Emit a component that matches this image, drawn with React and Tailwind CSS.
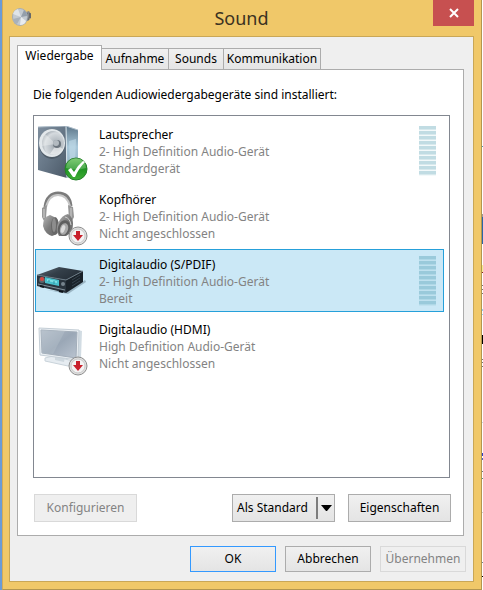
import clsx from "clsx";

const tabs = [
  { label: "Wiedergabe", width: "w-[85px]" },
  { label: "Aufnahme", width: "w-[67px]" },
  { label: "Sounds", width: "w-[55px]" },
  { label: "Kommunikation", width: "w-[97px]" },
];

const SpeakerIcon = () => (
  <svg width="52" height="56" viewBox="0 0 52 56" aria-hidden="true">
    <defs>
      <linearGradient id="spFront" x1="0" y1="0" x2="1" y2="1">
        <stop offset="0" stopColor="#7f8f9f" />
        <stop offset="0.5" stopColor="#667686" />
        <stop offset="1" stopColor="#4b5967" />
      </linearGradient>
      <linearGradient id="spSide" x1="0" y1="0" x2="0" y2="1">
        <stop offset="0" stopColor="#5d7689" />
        <stop offset="0.4" stopColor="#a9c8da" />
        <stop offset="1" stopColor="#8ba9ba" />
      </linearGradient>
      <radialGradient id="spCone" cx="0.65" cy="0.6" r="0.65">
        <stop offset="0" stopColor="#8f979e" />
        <stop offset="0.4" stopColor="#b9c0c6" />
        <stop offset="0.8" stopColor="#d5dade" />
        <stop offset="1" stopColor="#a9b1b8" />
      </radialGradient>
    </defs>
    <path d="M1 1 L29 0 L30 52 L1 44 Z" fill="url(#spFront)" />
    <path d="M29 0 L41 4 L41 47 L30 52 Z" fill="url(#spSide)" />
    <path d="M32 15 L39 13 L38 39 L33 40 Z" fill="#c3dcea" opacity="0.6" />
    <path d="M29 0 L30 52" stroke="#d9e5ec" strokeWidth="1" />
    <path d="M1 1 L29 0 L41 4" fill="none" stroke="#aebdc9" strokeWidth="1" />
    <ellipse cx="15" cy="18" rx="13" ry="15" fill="#4f5c68" />
    <ellipse cx="15" cy="17" rx="13" ry="14" fill="#e3e8eb" />
    <ellipse cx="16" cy="17" rx="11" ry="12" fill="url(#spCone)" />
    <path d="M19 18 L8 8 Q4 13 5 20 Z" fill="#f3f5f6" opacity="0.4" />
    <path d="M19 19 L13 28 Q21 31 26 23 Z" fill="#f7f8f9" opacity="0.6" />
    <ellipse cx="20" cy="18" rx="4" ry="4" fill="#6b747d" />
    <ellipse cx="19" cy="17" rx="3" ry="3" fill="#b3bac0" />
  </svg>
);

const HeadphonesIcon = () => (
  <svg width="52" height="56" viewBox="0 0 52 56" aria-hidden="true">
    <defs>
      <linearGradient id="hpCup" x1="0" y1="0" x2="1" y2="1">
        <stop offset="0" stopColor="#b5b5b5" />
        <stop offset="0.5" stopColor="#7c7c7c" />
        <stop offset="1" stopColor="#666" />
      </linearGradient>
    </defs>
    <path d="M8 16 C9 6 15 2 21 2 C28 2 33 6 34 15" fill="none" stroke="#7b7b7b" strokeWidth="3" />
    <path d="M9 16 C11 8 15 4 21 4 C27 4 31 8 33 15" fill="none" stroke="#c6c6c6" strokeWidth="2" />
    <path d="M5 17 L10 14 L9 27 L12 31 L8 32 L5 26 Z" fill="#979797" />
    <path d="M31 14 L36 16 L37 26 L34 32 L32 28 Z" fill="#979797" />
    <path d="M7 18 V27 M34 17 V27" stroke="#d0d0d0" strokeWidth="1" />
    <path d="M13 24 Q6 26 6 35 Q8 43 15 45 Q21 44 21 35 Q20 26 13 24 Z" fill="url(#hpCup)" />
    <ellipse cx="18" cy="35" rx="4" ry="9" fill="#686868" />
    <ellipse cx="17" cy="34" rx="2" ry="7" fill="#8d8d8d" />
    <path d="M31 23 Q36 26 36 33 Q36 42 29 45 L22 45 Q18 39 21 32 Q25 24 31 23 Z" fill="url(#hpCup)" />
    <ellipse cx="27" cy="37" rx="6" ry="8" fill="#5f5f5f" transform="rotate(18 27 37)" />
    <ellipse cx="27" cy="38" rx="4" ry="6" fill="#a8a8a8" transform="rotate(18 27 38)" />
    <ellipse cx="26" cy="38" rx="2" ry="4" fill="#dcdcdc" transform="rotate(18 26 38)" />
    <path d="M28 26 Q33 27 34 34" fill="none" stroke="#cdcdcd" strokeWidth="1" />
  </svg>
);

const ReceiverIcon = () => (
  <svg width="52" height="56" viewBox="0 0 52 56" aria-hidden="true">
    <defs>
      <linearGradient id="rcTop" x1="0" y1="0" x2="1" y2="0.6">
        <stop offset="0" stopColor="#5f6c76" />
        <stop offset="0.5" stopColor="#343f49" />
        <stop offset="1" stopColor="#252e37" />
      </linearGradient>
    </defs>
    <path d="M29 36 L48 24 L49 26 L31 38 L10 34 Z" fill="#7c95a3" opacity="0.6" />
    <path d="M0 19 L22 11 L46 15 L29 24 Z" fill="url(#rcTop)" />
    <path d="M29 24 L46 15 L46 26 L29 37 Z" fill="#1a2229" />
    <path d="M0 19 L29 24 L29 37 L0 30 Z" fill="#2a343d" />
    <path d="M0 19 L29 24 L46 15" fill="none" stroke="#6a7984" strokeWidth="1" />
    <path d="M1 28 L28 34" stroke="#82909a" strokeWidth="1" />
    <path d="M8 21 L22 24 L22 30 L8 27 Z" fill="#49bfcb" />
    <path d="M10 23 L20 25 L20 27 L10 25 Z" fill="#7fdfe4" />
    <path d="M12 24 V26 M17 25 V28" stroke="#2b93a4" strokeWidth="1" />
    <circle cx="5" cy="24" r="3" fill="#5b646b" />
    <circle cx="5" cy="23" r="2" fill="#d5453f" />
    <circle cx="26" cy="28" r="2" fill="#76838d" />
    <path d="M3 30 L7 31 M22 35 L26 36" stroke="#0e1419" strokeWidth="2" />
    <path d="M35 24 L43 19 M35 27 L43 22 M35 30 L43 25" stroke="#35424d" strokeWidth="1" />
  </svg>
);

const MonitorIcon = () => (
  <svg width="52" height="56" viewBox="0 0 52 56" aria-hidden="true">
    <defs>
      <linearGradient id="mnScreen" x1="0" y1="0" x2="1" y2="1">
        <stop offset="0" stopColor="#b3bdc9" />
        <stop offset="0.5" stopColor="#9aa7b6" />
        <stop offset="1" stopColor="#bac4d0" />
      </linearGradient>
    </defs>
    <path d="M8 37 L16 35 L36 40 L36 43 L31 45 L8 40 Z" fill="#e6ecf1" stroke="#c9d3da" />
    <path d="M18 34 L28 36 L27 41 L18 39 Z" fill="#cdd7de" />
    <path d="M41 9 L45 10 L44 37 L41 39 Z" fill="#d2dce3" />
    <path d="M2 7 L42 9 L41 39 L3 34 Z" fill="#eaeff3" stroke="#c4ced6" />
    <path d="M4 9 L40 11 L39 37 L5 32 Z" fill="url(#mnScreen)" stroke="#a3aeba" />
    <path d="M4 9 L28 10 L16 33 L5 32 Z" fill="#d3dae2" opacity="0.2" />
  </svg>
);

const CheckBadge = () => (
  <svg width="24" height="24" viewBox="0 0 24 24" aria-hidden="true">
    <defs>
      <linearGradient id="ckBg" x1="0" y1="0" x2="0" y2="1">
        <stop offset="0" stopColor="#5fc052" />
        <stop offset="0.5" stopColor="#1f9422" />
        <stop offset="1" stopColor="#3fae35" />
      </linearGradient>
    </defs>
    <circle cx="12" cy="12" r="11" fill="url(#ckBg)" stroke="#25802a" />
    <path d="M2 11 A10 10 0 0 1 22 11 Q12 14 2 11 Z" fill="#fff" opacity="0.2" />
    <path d="M4 13 L7 11 L10 15 Q14 8 19 4 L21 5 Q15 11 11 20 L9 20 Z" fill="#fff" />
  </svg>
);

const UnpluggedBadge = () => (
  <svg width="20" height="20" viewBox="0 0 20 20" aria-hidden="true">
    <circle cx="10" cy="10" r="9" fill="#e0e0e0" stroke="#8e8e8e" />
    <circle cx="10" cy="10" r="7" fill="#f3f3f3" stroke="#c9c9c9" />
    <path d="M8 5 H12 V9 H15 L10 15 L5 9 H8 Z" fill="#c8202c" />
  </svg>
);

const TitleIcon = () => (
  <svg width="20" height="20" viewBox="0 0 20 20" aria-hidden="true">
    <path d="M10 3 L14 5 L17 4 L19 7 L19 11 L16 14 L14 14 L10 17 Z" fill="#85888a" />
    <path d="M15 6 L16 13 M18 6 L18 11" stroke="#484b4d" strokeWidth="1" />
    <ellipse cx="8" cy="10" rx="8" ry="9" fill="#a5adb4" />
    <ellipse cx="8" cy="10" rx="7" ry="8" fill="#c3cad0" />
    <path d="M9 10 L1 7 Q2 3 6 2 Z" fill="#dfe4e8" />
    <path d="M9 10 L12 3 Q15 5 15 9 Z" fill="#939eaa" />
    <path d="M9 10 L8 18 Q13 18 14 14 Z" fill="#e9ecef" />
    <path d="M9 10 L1 12 Q2 16 5 17 Z" fill="#a8b1ba" />
  </svg>
);

const devices = [
  {
    name: "Lautsprecher",
    driver: "2- High Definition Audio-Gerät",
    status: "Standardgerät",
    Icon: SpeakerIcon,
    Badge: CheckBadge,
    badgeClass: "left-[27px] top-[31px]",
    meter: true,
  },
  {
    name: "Kopfhörer",
    driver: "2- High Definition Audio-Gerät",
    status: "Nicht angeschlossen",
    Icon: HeadphonesIcon,
    Badge: UnpluggedBadge,
    badgeClass: "left-[31px] top-[35px]",
  },
  {
    name: "Digitalaudio (S/PDIF)",
    driver: "2- High Definition Audio-Gerät",
    status: "Bereit",
    Icon: ReceiverIcon,
    meter: true,
    selected: true,
  },
  {
    name: "Digitalaudio (HDMI)",
    driver: "High Definition Audio-Gerät",
    status: "Nicht angeschlossen",
    Icon: MonitorIcon,
    Badge: UnpluggedBadge,
    badgeClass: "left-[31px] top-[35px]",
  },
];

// strip of the window behind the dialog: gap above, height, colour
const behind = [
  [146, 1, "#4f9bb0"],
  [67, 3, "#9a9a9a"],
  [0, 27, "#2a66a8"],
  [21, 7, "#f6ee8e"],
  [0, 1, "#8c1d1d"],
  [12, 1, "#777"],
  [3, 1, "#777"],
  [3, 1, "#777"],
  [15, 2, "#8fd0f5"],
  [3, 1, "#8fd0f5"],
  [20, 9, "#000"],
  [15, 1, "#777"],
  [2, 1, "#777"],
  [3, 1, "#777"],
  [55, 1, "#c8d4e0"],
  [30, 3, "#2b3fc4"],
  [2, 2, "#4a62d0"],
  [11, 1, "#6c7681"],
  [6, 1, "#4f8c8c"],
  [33, 1, "#ccc"],
  [49, 1, "#6d8494"],
  [13, 1, "#000"],
];

const Meter = ({ selected }) => (
  <span className="block w-[17px] shrink-0">
    {[...Array(10)].map((_, index) => (
      <span
        key={index}
        className={clsx(
          "block h-[5px] border-t-3 border-b",
          selected ? "border-t-[#9acadb] border-b-[#c0e1ef] bg-[#afd8e7]" : "border-t-[#c1dce3] border-b-[#f3f9fa] bg-[#d8e9ed]"
        )}
      ></span>
    ))}
  </span>
);

const Device = ({ name, driver, status, Icon, Badge, badgeClass, meter, selected }) => (
  <li role="option" aria-selected={!!selected}>
    <button
      type="button"
      className={clsx(
        "flex w-full items-start border pb-1 pl-px pr-[7px] pt-1.5 text-left",
        selected ? "border-[#26a0da] bg-[#cbe8f6]" : "border-transparent"
      )}
    >
      <span className="relative h-[51px] w-[62px] shrink-0">
        <Icon />
        {Badge && (
          <span className={clsx("absolute", badgeClass)}>
            <Badge />
          </span>
        )}
      </span>
      <span className="min-w-0 flex-1 leading-[17px] text-[#838383]">
        <span className="block text-black">{name}</span>
        <span className="block">{driver}</span>
        <span className="block">{status}</span>
      </span>
      {meter && <Meter selected={selected} />}
    </button>
  </li>
);

const Button = ({ children, className, primary, ...props }) => (
  <button
    type="button"
    className={clsx(
      "border bg-linear-to-b from-[#f0f0f0] to-[#e4e4e4] text-center text-black disabled:border-[#d9d9d9] disabled:bg-none disabled:bg-[#efefef] disabled:text-[#838383]",
      primary ? "border-[#3399ff]" : "border-[#acacac]",
      className
    )}
    {...props}
  >
    {children}
  </button>
);

export default function App() {
  return (
    <div className="flex min-h-screen border-l-2 border-l-[#6a9bd8] bg-white font-['Noto_Sans','Open_Sans',sans-serif] text-[12px] text-black">
      <main className="flex min-w-0 flex-1 flex-col border-x border-b border-l-[#d2ab5a] border-r-[#b39650] border-b-[#b39650] bg-[#f0c869] pb-[7px] pl-1.5 pr-[7px]">
        <header className="grid h-9 grid-cols-[41px_1fr_41px] items-start">
          <span className="pl-[3px] pt-[7px]">
            <TitleIcon />
          </span>
          <h1 className="self-center text-center text-[18px] leading-6 text-[#3b3222]">Sound</h1>
          <button type="button" aria-label="Schließen" className="flex h-[26px] items-center justify-center bg-[#c75050]">
            <svg width="12" height="10" viewBox="0 0 12 10" aria-hidden="true">
              <path d="M2 1 L10 9 M10 1 L2 9" stroke="#fff" strokeWidth="2" />
            </svg>
          </button>
        </header>

        <div className="flex flex-1 flex-col border border-[#c9a757] bg-[#efefef] px-[7px] pb-[9px] pt-2">
          <div role="tablist" className="flex items-end">
            {tabs.map(({ label, width }, index) => (
              <button
                key={label}
                type="button"
                role="tab"
                aria-selected={index === 0}
                className={clsx(
                  "border border-b-0 border-[#acacac] leading-5",
                  width,
                  index === 0
                    ? "z-10 -mb-px h-[25px] bg-white pb-1"
                    : "h-[21px] border-l-0 bg-linear-to-b from-[#f0f0f0] to-[#e5e5e5]"
                )}
              >
                {label}
              </button>
            ))}
          </div>

          <section role="tabpanel" className="mr-0.5 flex flex-1 flex-col border border-[#acacac] bg-white pb-[13px] pl-[15px] pr-3">
            <p id="devices-label" className="pb-3 pt-4 leading-[17px]">
              Die folgenden Audiowiedergabegeräte sind installiert:
            </p>
            <ul
              role="listbox"
              aria-labelledby="devices-label"
              className="mr-px flex flex-1 flex-col gap-0.5 border border-[#828790] bg-white pb-3 pl-px pr-[5px] pt-[3px]"
            >
              {devices.map((device) => (
                <Device key={device.name} {...device} />
              ))}
            </ul>
            <div className="flex justify-between pl-px pt-4">
              <Button disabled className="h-7 w-[103px]">
                Konfigurieren
              </Button>
              <div className="flex gap-[13px]">
                <Button className="flex h-7 w-[103px] items-center pl-1">
                  <span className="flex-1 text-left">Als Standard</span>
                  <span className="flex h-[22px] w-[18px] items-center justify-center border-l-2 border-[#7d7d7d]">
                    <svg width="11" height="6" viewBox="0 0 11 6" aria-hidden="true">
                      <path d="M0 0 H11 L6 6 H5 Z" fill="#000" />
                    </svg>
                  </span>
                </Button>
                <Button className="h-7 w-[103px]">Eigenschaften</Button>
              </div>
            </div>
          </section>

          <footer className="flex justify-end gap-[9px] pt-2.5">
            <Button primary className="h-[26px] w-[86px]">
              OK
            </Button>
            <Button className="h-[26px] w-[86px]">Abbrechen</Button>
            <Button disabled className="h-[26px] w-[86px]">
              Übernehmen
            </Button>
          </footer>
        </div>
      </main>
      <div className="w-px" aria-hidden="true">
        {behind.map(([gap, height, color], index) => (
          <div key={index} style={{ paddingTop: gap }}>
            <div style={{ height, background: color }}></div>
          </div>
        ))}
      </div>
    </div>
  );
}
